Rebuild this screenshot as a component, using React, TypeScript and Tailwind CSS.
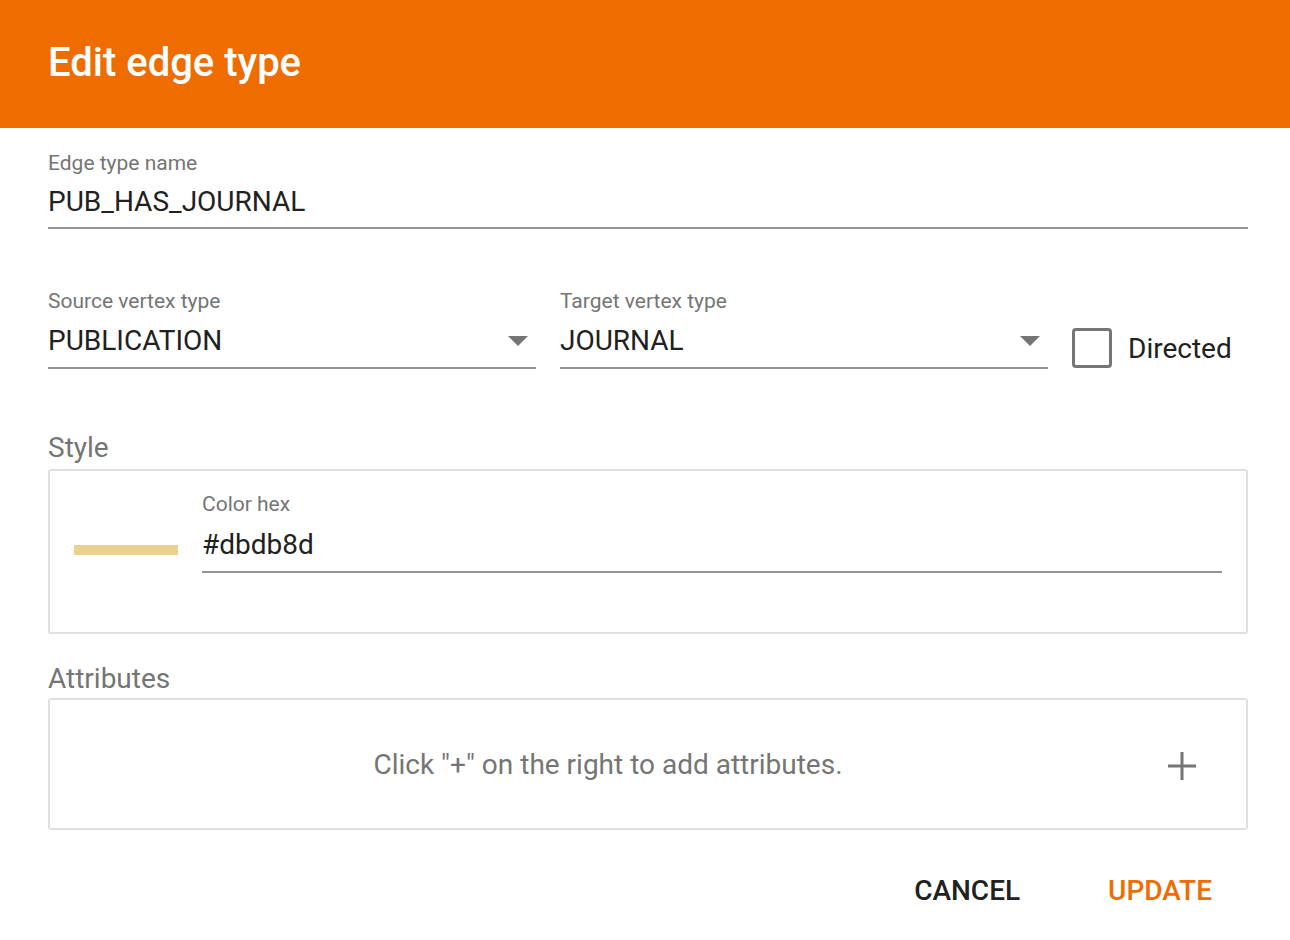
import React from "react";

function Field({ label, value, className = "", arrow = false, h = "h-[54px]" }: { label: string; value: string; className?: string; arrow?: boolean; h?: string }) {
  return (
    <div className={"flex flex-col " + className}>
      <div className="text-[21px] leading-[24px] text-[#757575]">{label}</div>
      <div className={"flex items-center justify-between border-b-2 border-[#949494] pt-[2px] " + h}>
        <span className="text-[28px] text-[#212121] leading-[32px]">{value}</span>
        {arrow && (
          <svg width="20" height="10" viewBox="0 0 20 10" className="mr-[8px]">
            <path d="M0 0 L20 0 L10 10 Z" fill="#757575" />
          </svg>
        )}
      </div>
    </div>
  );
}

export default function App() {
  return (
    <div className="w-[1290px] h-[940px] bg-white" style={{ fontFamily: "Roboto, 'Liberation Sans', sans-serif" }}>
      <div className="h-[128px] bg-[#ef6c00] flex items-center px-[48px]">
        <h1 className="text-white text-[40px] font-medium leading-none mt-[-2px]">Edit edge type</h1>
      </div>
      <div className="pl-[48px] pr-[42px]">
        <Field label="Edge type name" value="PUB_HAS_JOURNAL" className="pt-[23px]" />
        <div className="flex items-end mt-[60px]">
          <Field label="Source vertex type" value="PUBLICATION" arrow className="w-[488px]" h="h-[56px]" />
          <Field label="Target vertex type" value="JOURNAL" arrow className="w-[488px] ml-[24px]" h="h-[56px]" />
          <div className="flex items-center ml-[24px] mb-[1px]">
            <div className="w-[40px] h-[40px] border-[3px] border-[#757575] rounded-[4px]" />
            <span className="ml-[16px] text-[28px] text-[#212121] leading-[32px] pt-[2px]">Directed</span>
          </div>
        </div>
        <div className="mt-[64px] text-[28px] text-[#757575] leading-[30px]">Style</div>
        <div className="mt-[6px] h-[165px] border-2 border-[#e0e0e0] rounded-[3px] flex items-start pl-[24px] pr-[24px]">
          <div className="w-[104px] h-[10px] bg-[#ead28e] mt-[74px]" />
          <Field label="Color hex" value="#dbdb8d" className="flex-1 ml-[24px] pt-[21px]" h="h-[57px]" />
        </div>
        <div className="mt-[30px] text-[28px] text-[#757575] leading-[30px]">Attributes</div>
        <div className="mt-[4px] h-[132px] border-2 border-[#e0e0e0] rounded-[3px] flex items-center relative">
          <div className="flex-1 text-center text-[28px] text-[#757575] pr-[80px] pt-[2px]">Click "+" on the right to add attributes.</div>
          <svg width="28" height="28" viewBox="0 0 28 28" className="absolute right-[50px] top-[52px]">
            <path d="M14 0 V28 M0 14 H28" stroke="#757575" strokeWidth="3" />
          </svg>
        </div>
        <div className="flex justify-end mt-[45px] pr-[36px] gap-[88px]">
          <button className="text-[28px] font-medium text-[#212121] leading-[32px]">CANCEL</button>
          <button className="text-[28px] font-medium text-[#ef6c00] leading-[32px]">UPDATE</button>
        </div>
      </div>
    </div>
  );
}
